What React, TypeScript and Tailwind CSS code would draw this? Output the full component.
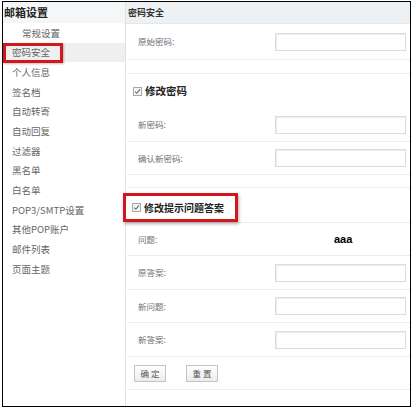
import React from "react";

const menu = [
  { title: "常规设置", indent: true },
  { title: "密码安全", active: true },
  { title: "个人信息" },
  { title: "签名档" },
  { title: "自动转寄" },
  { title: "自动回复" },
  { title: "过滤器" },
  { title: "黑名单" },
  { title: "白名单" },
  { title: "POP3/SMTP设置" },
  { title: "其他POP账户" },
  { title: "邮件列表" },
  { title: "页面主题" },
];

const font = { fontFamily: '"Noto Sans CJK SC", "Liberation Sans", sans-serif' };

function Check() {
  return (
    <span className="flex h-[9px] w-[9px] items-center justify-center border border-[#a9a9a9] bg-[#f4f4f4]">
      <svg width="7" height="7" viewBox="0 0 7 7">
        <path d="M1 3.6 L2.8 5.3 L6 1.4" fill="none" stroke="#6b6b6b" strokeWidth="1.1" />
      </svg>
    </span>
  );
}

function Field({ label, h }: { label: string; h: string }) {
  return (
    <div className={`flex items-center border-b border-[#ececec] ml-[1px] ${h}`}>
      <span className="w-[148px] pl-[11px] text-[8.5px] text-[#6b6f78]">{label}</span>
      <span className="h-[18px] w-[131px] border border-[#dcdcdc] bg-white shadow-[inset_1px_1px_1px_#ededed]" />
    </div>
  );
}

export default function App() {
  return (
    <div className="h-[408px] w-[412px] bg-white pl-[2px] pt-[1px]" style={font}>
      <div className="flex h-[406px] w-[409px] border border-black">
        <aside className="w-[123px] shrink-0 border-r border-[#e2e2e2]">
          <div className="flex h-[21px] items-center bg-[#f5f6f7] pl-[1px] text-[11px] font-bold text-[#222]">
            邮箱设置
          </div>
          <ul>
            {menu.map((item) => (
              <li
                key={item.title}
                className={`relative flex h-[19.67px] items-center text-[9.5px] text-[#666] ${item.indent ? "pl-[19px]" : "pl-[9px]"} ${item.active ? "bg-[#efefef]" : ""}`}
              >
                {item.title}
                {item.active && (
                  <span className="absolute left-0 top-[0.5px] h-[20px] w-[60px] border-[3px] border-[#d3151f] shadow-[1px_1px_2px_rgba(0,0,0,0.25)]" />
                )}
              </li>
            ))}
          </ul>
        </aside>

        <main className="flex-1">
          <div className="flex h-[22px] items-center border-b border-[#e4e7eb] bg-[#eef1f4] pl-[2px] text-[9px] font-bold text-[#333]">
            密码安全
          </div>
          <Field label="原始密码:" h="h-[36px]" />
          <div className="ml-[1px] h-[14px] border-b border-[#ececec]" />
          <div className="flex h-[34px] items-center gap-[3px] pl-[7px]">
            <Check />
            <span className="text-[10.5px] font-bold text-[#222]">修改密码</span>
          </div>
          <Field label="新密码:" h="h-[34px]" />
          <Field label="确认新密码:" h="h-[33px]" />
          <div className="ml-[1px] h-[13px] border-b border-[#ececec]" />
          <div className="relative flex h-[35px] items-center gap-[3px] border-b border-[#ececec] pl-[6px] pt-[4px]">
            <Check />
            <span className="text-[10px] font-bold text-[#222]">修改提示问题答案</span>
            <span className="absolute left-[-3px] top-[5px] h-[29px] w-[115px] border-[3px] border-[#d3151f] shadow-[1px_2px_3px_rgba(0,0,0,0.3)]" />
          </div>
          <div className="ml-[1px] flex h-[33px] items-center border-b border-[#ececec]">
            <span className="w-[148px] pl-[11px] text-[8.5px] text-[#6b6f78]">问题:</span>
            <span className="ml-[59px] text-[11px] font-bold leading-none text-black" style={{ fontFamily: '"Liberation Sans", sans-serif' }}>
              aaa
            </span>
          </div>
          <Field label="原答案:" h="h-[34px]" />
          <Field label="新问题:" h="h-[33px]" />
          <Field label="新答案:" h="h-[34px]" />
          <div className="ml-[1px] flex h-[33px] items-center gap-[20px] border-b border-[#ececec] pl-[7px]">
            <button className="h-[17px] w-[32px] border border-[#c4c4c4] bg-gradient-to-b from-white to-[#ececec] text-[8.5px] text-[#555]">
              确 定
            </button>
            <button className="h-[17px] w-[32px] border border-[#c4c4c4] bg-gradient-to-b from-white to-[#ececec] text-[8.5px] text-[#555]">
              重 置
            </button>
          </div>
        </main>
      </div>
    </div>
  );
}
